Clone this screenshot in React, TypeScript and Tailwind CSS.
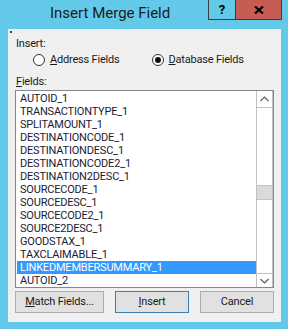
import React from "react";

const FONT = { fontFamily: '"Segoe UI", Roboto, "Noto Sans", sans-serif' };

const FIELDS = [
  "AUTOID_1",
  "TRANSACTIONTYPE_1",
  "SPLITAMOUNT_1",
  "DESTINATIONCODE_1",
  "DESTINATIONDESC_1",
  "DESTINATIONCODE2_1",
  "DESTINATION2DESC_1",
  "SOURCECODE_1",
  "SOURCEDESC_1",
  "SOURCECODE2_1",
  "SOURCE2DESC_1",
  "GOODSTAX_1",
  "TAXCLAIMABLE_1",
  "LINKEDMEMBERSUMMARY_1",
  "AUTOID_2",
];

function Radio({ checked }: { checked?: boolean }) {
  return (
    <span className="flex h-[12px] w-[12px] items-center justify-center rounded-full border border-[#333] bg-white">
      {checked && <span className="h-[6px] w-[6px] rounded-full bg-[#111]" />}
    </span>
  );
}

function Chevron({ up }: { up?: boolean }) {
  return (
    <svg width="9" height="6" viewBox="0 0 9 6">
      <path
        d={up ? "M0.5 5 L4.5 1 L8.5 5" : "M0.5 1 L4.5 5 L8.5 1"}
        fill="none"
        stroke="#606060"
        strokeWidth="1.2"
      />
    </svg>
  );
}

export default function App() {
  return (
    <div
      className="flex h-[329px] w-[288px] flex-col overflow-hidden bg-[#63c9e9] text-[11px] tracking-[-0.2px] text-[#1a1a1a]"
      style={FONT}
    >
      {/* title bar */}
      <div className="flex h-[29px] shrink-0 items-start">
        <div className="flex-1 pl-[50px] pt-[3px] text-[15px] leading-[20px] tracking-normal text-[#1b1b1b]">
          Insert Merge Field
        </div>
        <div className="mr-[6px] flex h-[20px] border border-t-0 border-[#3c3c3c]">
          <div className="flex w-[27px] items-center justify-center border-r border-[#3c3c3c] text-[13px] font-bold text-black">
            ?
          </div>
          <div className="flex w-[45px] items-center justify-center bg-[#c75c52]">
            <svg width="10" height="8" viewBox="0 0 10 8">
              <path d="M1 0.5 L9 7.5 M9 0.5 L1 7.5" stroke="#000" strokeWidth="2.2" />
            </svg>
          </div>
        </div>
      </div>

      {/* client */}
      <div className="ml-[8px] mr-[7px] flex h-[293px] flex-col bg-[#f0f0f0] px-[7px]">
        <div className="ml-[-5px] mt-[2px] h-[2px] w-[2px] bg-[#444]" />
        <div className="ml-[1px] mt-[4px] leading-[13px]">Insert:</div>
        <div className="mt-[3px] flex h-[14px] items-center">
          <div className="ml-[18px] flex items-center gap-[5px]">
            <Radio />
            <span>
              <span className="underline">A</span>ddress Fields
            </span>
          </div>
          <div className="ml-[33px] flex items-center gap-[4px]">
            <Radio checked />
            <span>
              <span className="underline">D</span>atabase Fields
            </span>
          </div>
        </div>
        <div className="ml-[1px] mt-[8px] leading-[13px]">
          <span className="underline">F</span>ields:
        </div>

        {/* list box */}
        <div className="mt-[2px] flex h-[198px] w-[259px] border border-[#828790] bg-white">
          <div className="flex-1 overflow-hidden pl-[1px] pt-[1px] text-[#1c1a30]">
            {FIELDS.map((f, i) => (
              <div
                key={f}
                className={
                  "h-[13px] whitespace-nowrap pl-[3px] leading-[13px] " +
                  (i === 13 ? "bg-[#3399ff] text-white" : "")
                }
              >
                {f}
              </div>
            ))}
          </div>
          <div className="flex w-[17px] flex-col border-x border-[#c2c2c2] bg-white">
            <div className="flex h-[17px] items-center justify-center border-b border-[#c2c2c2]">
              <Chevron up />
            </div>
            <div className="flex-1">
              <div className="mt-[77px] h-[15px] border-y border-[#c2c2c2] bg-[#dadada]" />
            </div>
            <div className="flex h-[14px] items-center justify-center border-t border-[#c2c2c2]">
              <Chevron />
            </div>
          </div>
        </div>

        {/* buttons */}
        <div className="mt-[3px] flex gap-[11px]">
          <button className="flex h-[22px] w-[89px] items-center justify-center border border-[#adadad] bg-[#e1e1e1]">
            <span>
              <span className="underline">M</span>atch Fields...
            </span>
          </button>
          <button className="flex h-[22px] w-[74px] items-center justify-center border border-[#3c7fb1] bg-[#e1e1e1]">
            <span>
              <span className="underline">I</span>nsert
            </span>
          </button>
          <button className="flex h-[22px] w-[74px] items-center justify-center border border-[#adadad] bg-[#e1e1e1]">
            Cancel
          </button>
        </div>
      </div>
    </div>
  );
}
